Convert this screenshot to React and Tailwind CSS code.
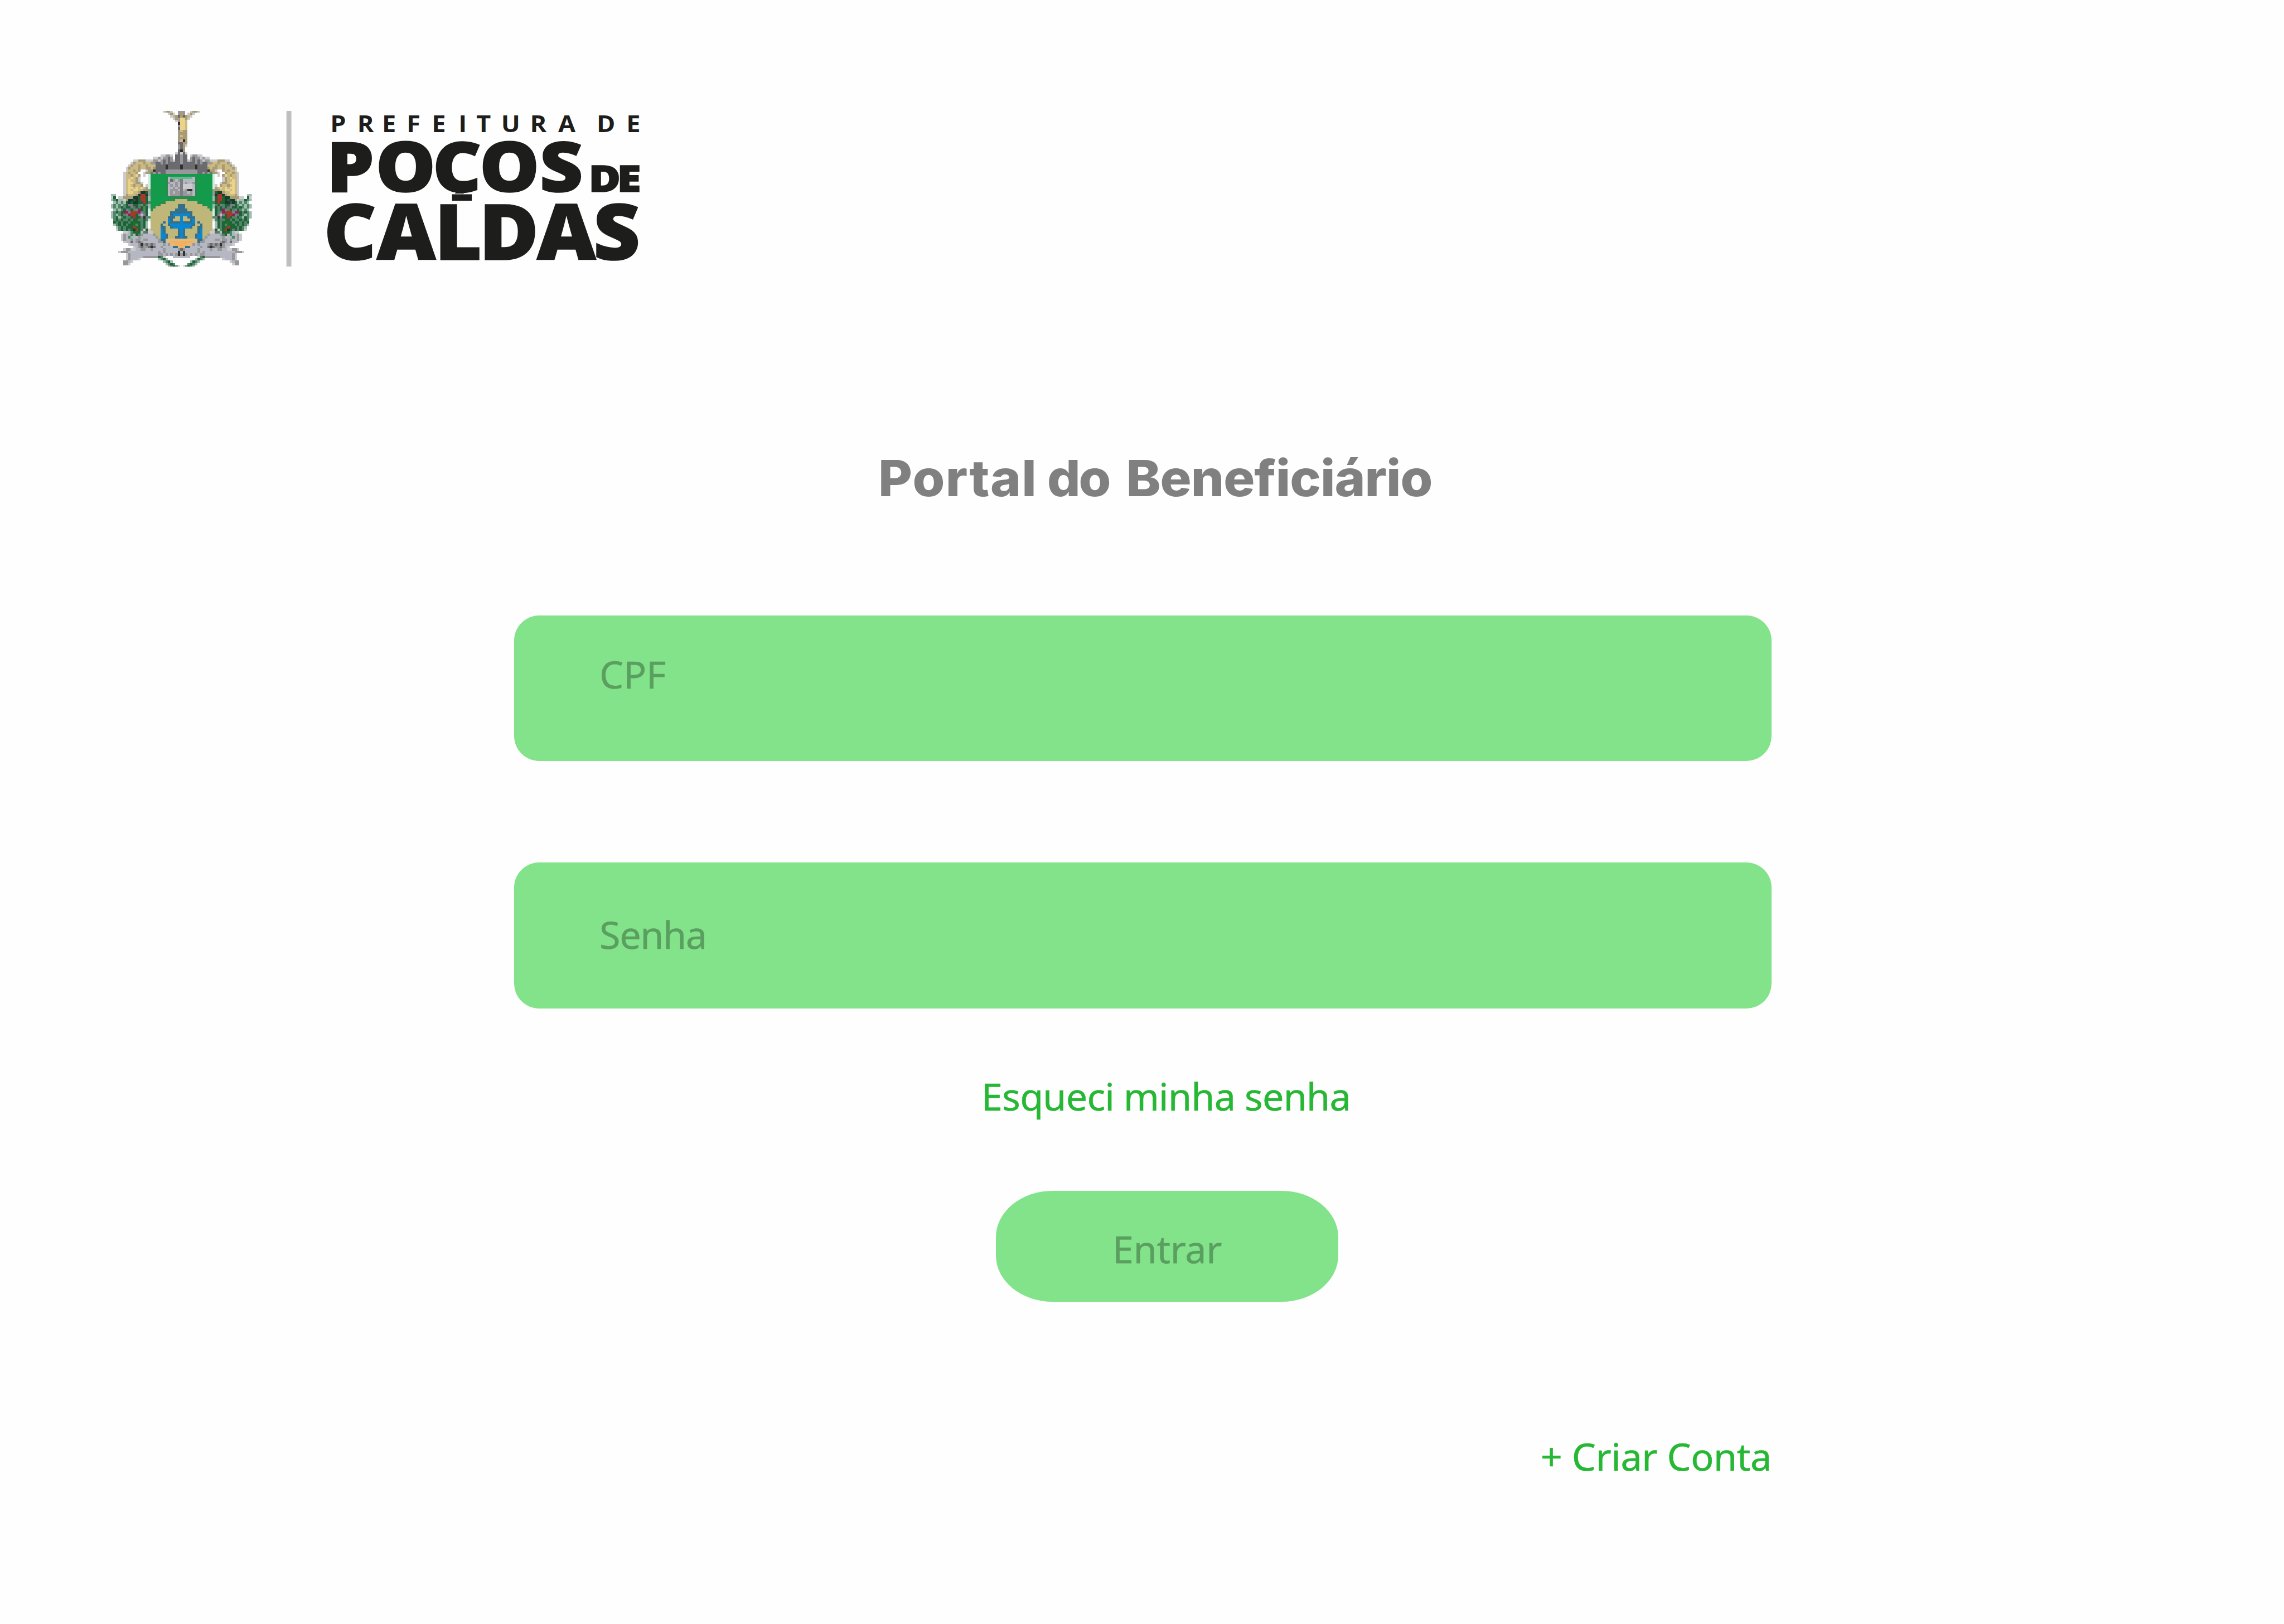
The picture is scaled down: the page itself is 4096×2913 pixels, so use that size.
const PALETTE = {
  l: '#cbcbcd', g: '#98989b', d: '#6b6b6f', k: '#303030',
  b: '#cbba82', t: '#a89b76', y: '#ecd38a',
  G: '#139b4b', h: '#2a8a50', q: '#68b791', e: '#d2ede0',
  f: '#1f6238', F: '#143c2d', m: '#508668', p: '#a0bcae', n: '#1d7028',
  r: '#a8382a', u: '#8a2452', v: '#7d7d86', w: '#b5b8c2',
  s: '#bfb67a', B: '#0a87d0', T: '#33708c', o: '#f2b05f', x: '#e2ba7e',
};

// Coat of arms, run-length rows of the left half plus the centre column.
const HALF = [
  '21.l2tl2.gt', '23.ltl.gt', '24.lbtdt', '25.ltgt', '26.lgy', '27.ky', '27.gy', '27.dy',
  '27.gb', '27.tb', '27.tb', '27.gt', '27.tb', '27.dd', '27.gd', '27.gd', '27.dk', '26.ldl',
  '20.2l2gl.2dg', '17.2lgl2gdg.2dg', '9.2l3t3l2glgdgdgl2dg', '8.lt3bt2btg2dgdg5dg',
  '7.lt2bt2bt3b4dk5dk', '6.lt3bt2b2tbt4dk5dk', '6.l2btbt2.l2tk4d7g', '5.lbt2bt2.l2tmgdg2d7g',
  '5.l2btbyt.l.e13G', '5.l2bybtl3.e6Ghw5q', '5.lby2btl3.e6Ghwdgwgv', '5.lb2yb2tl2.e6Ghg2wgwv',
  '5.lbybt2bt.le6Ghwgwgwv', '5.lb2ybybybte6Gh2wgwgv', '5.lbyb2y2b3t6Ghw3gwv',
  '5.lb2y2bt2Ffg6Ghwgw2gv', '2p3.lt3btF2rFg6Ghw4gv', 'lf.2l4t2Ff2rfp7G6h',
  'pmf2plt2Ffkf2rfp9Gh3s', '.pmpmpfFf2F2frfm4G2h7s', 'pmpmpmfvvffmvfmp3Gh7s2T',
  'pmpmfmffvdfmfmfpGh9s2T', '.pmpmfvmfmvufmfeh9s3T', 'pmfmfuuvrrruvmfe8s5T',
  'pmpmfmvurrfvwvfe8sT4B', 'pmfpmfmmfrffvkvm7s3T2sB', '.mfmfmmfmfnmmfme7sBT3sB',
  '.fmfmffmfnffmfp.5sTsB4TB', '.pmfmfmffnmfmfp.4sT2sT5B', '..pmfmfffrnfmfp.4s2T2sT4B',
  '..lmfmfmfFrfmlfl4sBT5sTB', '5.2lwmfnfwmdll3sBT5sTB', '4.lgwpmwfmg3wwg2s2BT4sTB',
  '4.lgwmp2wgp3w2wgs2BT3s2TB', '4.lg2wgw2gw2gw3wg2T7x', '5.l2wdwgdg3w3w2gT2x5o',
  '7.l3wgkgdgdg3wgwg2x3o', '9.lwgd2gdkd2wg4w2Txo', '5.l2g2l2w2g2wg4wg5wgd',
  '3.l3g9w3wgwg5wkw', '6.lg8w3w2gwgwgwgkg', '6.lg5w3g3gfml3.4w', '6.lg3wl4.3.pmfp',
  '5.2gwl7.5.pmfp', '5.2gl8.6.pmfm', '23.pmfml',
];

// Details that break the left/right symmetry: x, y, width, height, colour key.
const DETAILS = [
  [27, 3, 4, 1, 't'], [28, 3, 2, 5, 'y'], [30, 4, 1, 4, 'b'],
  [29, 8, 1, 4, 't'], [30, 8, 1, 6, 't'], [28, 9, 1, 1, 't'], [29, 12, 1, 1, 'k'],
  [29, 13, 1, 4, 't'], [30, 14, 1, 1, 'l'],
  [29, 30, 4, 2, 'l'], [31, 32, 2, 1, 'k'], [24, 28, 1, 1, 'd'], [29, 28, 4, 1, 'w'],
];

function toRuns(row) {
  const runs = [];
  let x = 0;
  for (const [, n, key] of row.matchAll(/(\d*)(\D)/g)) {
    const w = n ? Number(n) : 1;
    if (key !== '.') runs.push([x, w, key]);
    x += w;
  }
  return runs;
}

function Crest() {
  return (
    <svg x="291" y="291" width="370" height="409" viewBox="0 0.38 57 63.04" preserveAspectRatio="none" shapeRendering="crispEdges">
      {HALF.map((row, y) =>
        toRuns(row).map(([x, w, key]) => (
          <g key={`${x}-${y}`} fill={PALETTE[key]}>
            <rect x={x} y={y} width={w} height="1" />
            <rect x={57 - x - w} y={y} width={w} height="1" />
          </g>
        ))
      )}
      {DETAILS.map(([x, y, w, h, key]) => (
        <rect key={`d${x}-${y}`} x={x} y={y} width={w} height={h} fill={PALETTE[key]} />
      ))}
    </svg>
  );
}

function Logo() {
  return (
    <svg
      className="block h-[279.2px] w-[947.5px] overflow-visible font-['Open_Sans','Noto_Sans',sans-serif]"
      viewBox="291 291 1388 409"
      fill="#1d1d1b"
      role="img"
      aria-label="Prefeitura de Poços de Caldas"
    >
      <defs>
        <clipPath id="baseline">
          <rect x="840" y="350" width="700" height="158" />
        </clipPath>
      </defs>
      <Crest />
      <rect x="752" y="291" width="13" height="409" fill="#bfbfbf" />
      <text
        transform="translate(3 0) scale(1.1 1)"
        x="785.5 850 909 968 1028 1092 1134.5 1193.6 1262.7 1330 1390 1421.8 1492.7"
        y="347"
        fontSize="60"
        fontWeight="700"
      >
        PREFEITURA DE
      </text>
      <g stroke="#1d1d1b" strokeWidth="2.5">
        <g clipPath="url(#baseline)">
          <text transform="translate(4 0) scale(1.09 1)" x="782.6 900.9 1038.5 1151.4 1296.3" y="503" fontSize="182" fontWeight="800">
            POÇOS
          </text>
        </g>
        <text transform="translate(3 0) scale(1.2 1)" x="1285.8 1348.3" y="503" fontSize="95" fontWeight="800">
          DE
        </text>
        <text transform="translate(4 0) scale(1.06 1)" x="798.1 929.2 1072.6 1183 1326.4 1466" y="682" fontSize="202" fontWeight="800">
          CALDAS
        </text>
      </g>
      <rect x="1187" y="510" width="52" height="17" />
    </svg>
  );
}

function Field({ className, children }) {
  return (
    <div className={`h-[261.6px] rounded-[45px] bg-[#83e38a] pl-[153.5px] text-[#5a9f60] ${className}`}>
      {children}
    </div>
  );
}

export default function App() {
  return (
    <main className="flex h-[2913px] w-[4096px] flex-col overflow-hidden bg-[#fefefe] pl-[198.6px] pt-[198.6px] font-['Noto_Sans',sans-serif] text-[68.27px] leading-[92px]">
      <Logo />
      <h1 className="ml-[1376px] mt-[325px] origin-left scale-x-[1.04] self-start whitespace-nowrap font-['Inter',sans-serif] text-[90px] font-extrabold leading-[110px] text-[#808080]">
        <span className="mr-[-2.6px] tracking-[1.3px]">Portal</span>{' '}
        <span className="mr-[9.2px] tracking-[-3px]">do</span>{' '}
        <span className="tracking-[-1px]">Beneficiário</span>
      </h1>
      <form className="ml-[723px] mt-[190.8px] flex w-[2255.4px] flex-col [-webkit-text-stroke:0.5px_currentColor]">
        <Field className="pt-[59.5px] tracking-[-0.3px]">CPF</Field>
        <Field className="mt-[182px] pt-[82.5px] tracking-[-1.4px]">Senha</Field>
        <a className="ml-[838.5px] mt-[111px] self-start tracking-[-0.8px] text-[#26b734]">Esqueci minha senha</a>
        <button
          type="button"
          className="ml-[864.3px] mt-[124.3px] h-[198.7px] w-[614.4px] rounded-[102px/83px] bg-[#83e38a] pt-[10px] tracking-[-0.3px] text-[#5a9f60]"
        >
          Entrar
        </button>
        <a className="mt-[231px] self-end tracking-[-0.4px] text-[#26b734]">+ Criar Conta</a>
      </form>
    </main>
  );
}
